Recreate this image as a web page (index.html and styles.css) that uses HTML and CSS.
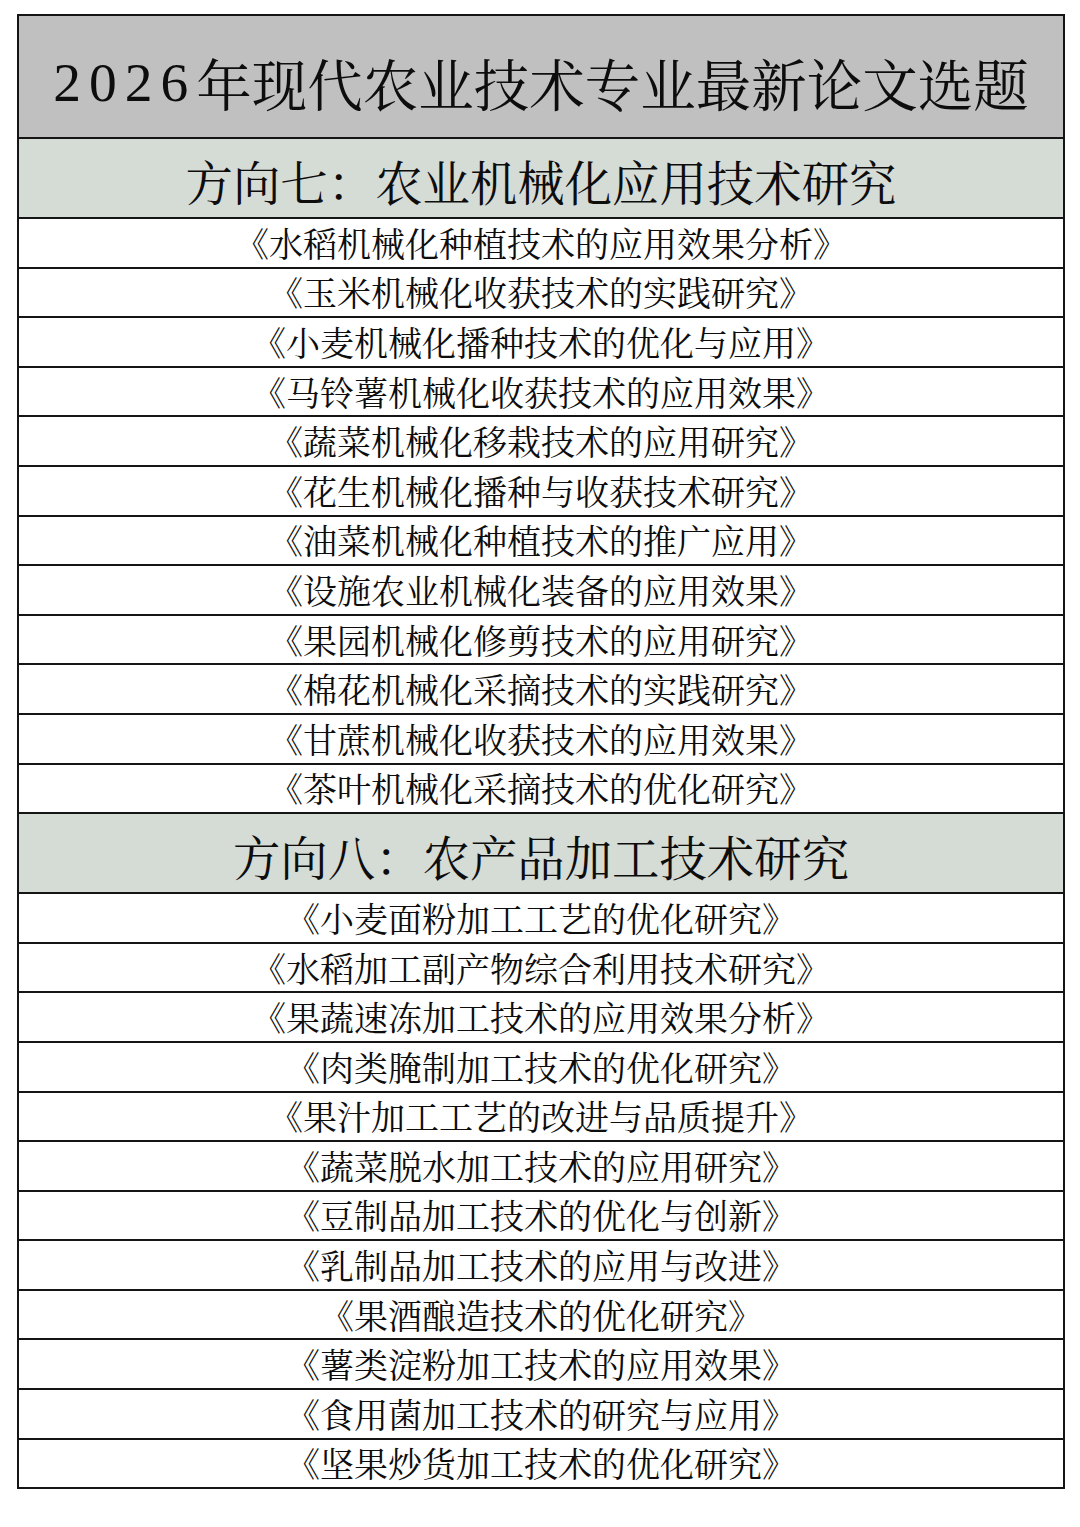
FILE: index.html
```html
<!DOCTYPE html>
<html lang="zh-CN">
<head>
<meta charset="utf-8">
<title>2026年现代农业技术专业最新论文选题</title>
<link rel="stylesheet" href="styles.css">
</head>
<body>
<div class="sheet">
  <div class="title"><span class="num">2026</span>年现代农业技术专业最新论文选题</div>
  <div class="section-head">方向七：农业机械化应用技术研究</div>
  <div class="item">《水稻机械化种植技术的应用效果分析》</div>
  <div class="item">《玉米机械化收获技术的实践研究》</div>
  <div class="item">《小麦机械化播种技术的优化与应用》</div>
  <div class="item">《马铃薯机械化收获技术的应用效果》</div>
  <div class="item">《蔬菜机械化移栽技术的应用研究》</div>
  <div class="item">《花生机械化播种与收获技术研究》</div>
  <div class="item">《油菜机械化种植技术的推广应用》</div>
  <div class="item">《设施农业机械化装备的应用效果》</div>
  <div class="item">《果园机械化修剪技术的应用研究》</div>
  <div class="item">《棉花机械化采摘技术的实践研究》</div>
  <div class="item">《甘蔗机械化收获技术的应用效果》</div>
  <div class="item">《茶叶机械化采摘技术的优化研究》</div>
  <div class="section-head">方向八：农产品加工技术研究</div>
  <div class="item">《小麦面粉加工工艺的优化研究》</div>
  <div class="item">《水稻加工副产物综合利用技术研究》</div>
  <div class="item">《果蔬速冻加工技术的应用效果分析》</div>
  <div class="item">《肉类腌制加工技术的优化研究》</div>
  <div class="item">《果汁加工工艺的改进与品质提升》</div>
  <div class="item">《蔬菜脱水加工技术的应用研究》</div>
  <div class="item">《豆制品加工技术的优化与创新》</div>
  <div class="item">《乳制品加工技术的应用与改进》</div>
  <div class="item">《果酒酿造技术的优化研究》</div>
  <div class="item">《薯类淀粉加工技术的应用效果》</div>
  <div class="item">《食用菌加工技术的研究与应用》</div>
  <div class="item">《坚果炒货加工技术的优化研究》</div>
</div>
</body>
</html>
```
FILE: styles.css
```css
html, body {
  margin: 0;
  padding: 0;
  background: #ffffff;
}

body {
  font-family: "Noto Serif CJK SC", "Noto Sans CJK SC", sans-serif;
  color: #0d0d0d;
}

.sheet {
  margin: 14px 0 0 17px;
  width: 1048px;
  box-sizing: border-box;
  border: 2px solid #151515;
  display: flex;
  flex-direction: column;
}

.title,
.section-head,
.item {
  box-sizing: border-box;
  display: flex;
  align-items: center;
  justify-content: center;
  border-bottom: 2px solid #151515;
  white-space: nowrap;
  line-height: 1;
}

.title {
  height: 123px;
  padding-top: 12px;
  background: #c0c0c0;
  font-size: 55.5px;
}

.title .num {
  font-family: "Liberation Serif", serif;
  font-size: 55.5px;
  letter-spacing: 8px;
}

.section-head {
  height: 80px;
  padding-top: 6px;
  background: #d5dbd5;
  font-size: 47.4px;
}

.item {
  height: 49.6px;
  font-size: 34px;
  background: #ffffff;
}

.item:last-child {
  border-bottom: none;
  height: 47.6px;
}
```
